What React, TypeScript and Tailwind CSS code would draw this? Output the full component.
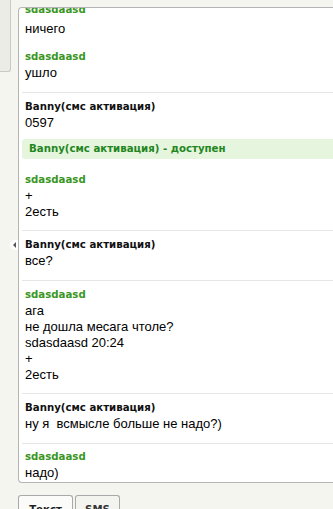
import React from "react";

const nameCls =
  "font-['DejaVu_Sans',Verdana,sans-serif] font-bold text-[10.2px] leading-[16px]";
const bodyCls =
  "font-['Liberation_Sans',Arial,sans-serif] text-[13px] leading-[16px] text-black whitespace-pre";

function Name({ green, children, extra = "" }: { green?: boolean; children: React.ReactNode; extra?: string }) {
  return (
    <div className={`${nameCls} ${green ? "text-[#3a961f]" : "text-[#111111]"} ${extra}`}>{children}</div>
  );
}

function Body({ lines }: { lines: string[] }) {
  return (
    <>
      {lines.map((l, i) => (
        <div key={i} className={bodyCls}>
          {l}
        </div>
      ))}
    </>
  );
}

export default function App() {
  return (
    <div className="w-[333px] h-[509px] overflow-hidden bg-[#f5f5f0] flex items-start">
      <div className="w-[11px] h-[72px] shrink-0 bg-[#ececE7] border-r border-b border-[#c9c9c5] rounded-br-[3px]" />
      <div className="ml-[7px] flex-1 flex flex-col pt-[7px]">
        <div className="relative">
          <div className="h-[476px] bg-white border border-r-0 border-[#b5b5b5] rounded-l-[4px] overflow-hidden flex flex-col justify-end">
            {/* block 0 */}
            <div className="ml-[3px] pl-[3px] pb-[12px]">
              <Name green extra="mb-[3px]">sdasdaasd</Name>
              <Body lines={["ничего"]} />
            </div>
            <div className="ml-[3px] pl-[3px] pb-[11px]">
              <Name green>sdasdaasd</Name>
              <Body lines={["ушло"]} />
            </div>
            {/* block 1 */}
            <div className="ml-[3px] border-t border-[#e6e6e6]">
              <div className="pl-[3px] pt-[6px] pb-[8px]">
                <Name>Banny(смс активация)</Name>
                <Body lines={["0597"]} />
              </div>
              <div className="h-[20px] bg-[#e6f5de] rounded-l-[3px] pl-[7px] flex items-center">
                <div className={`${nameCls} text-[#1f861d] leading-[20px]`}>
                  Banny(смс активация) - доступен
                </div>
              </div>
              <div className="pl-[3px] pt-[13px] pb-[10px]">
                <Name green>sdasdaasd</Name>
                <Body lines={["+", "2есть"]} />
              </div>
            </div>
            {/* block 2 */}
            <div className="ml-[3px] pl-[3px] border-t border-[#e6e6e6] pt-[6px] pb-[11px]">
              <Name>Banny(смс активация)</Name>
              <Body lines={["все?"]} />
            </div>
            {/* block 3 */}
            <div className="ml-[3px] pl-[3px] border-t border-[#e6e6e6] pt-[6px] pb-[10px]">
              <Name green>sdasdaasd</Name>
              <Body
                lines={["ага", "не дошла месага чтоле?", "sdasdaasd 20:24", "+", "2есть"]}
              />
            </div>
            {/* block 4 */}
            <div className="ml-[3px] pl-[3px] border-t border-[#e6e6e6] pt-[6px] pb-[11px]">
              <Name>Banny(смс активация)</Name>
              <Body lines={["ну я  всмысле больше не надо?)"]} />
            </div>
            {/* block 5 */}
            <div className="ml-[3px] pl-[3px] border-t border-[#e6e6e6] pt-[5px] pb-[1px]">
              <Name green>sdasdaasd</Name>
              <Body lines={["надо)"]} />
            </div>
          </div>
          {/* collapse bump */}
          <div className="absolute left-[-8px] top-[233px] w-[8px] h-[10px] bg-white rounded-l-full flex items-center justify-end pr-[2px]">
            <div className="w-0 h-0 border-y-[3px] border-y-transparent border-r-[3px] border-r-[#555555]" />
          </div>
        </div>
        <div className="flex gap-[2px] mt-[12px]">
          <div className="w-[55px] h-[24px] border border-b-0 border-[#a9a9a9] rounded-t-[3px] bg-[#fbfbf9] flex justify-center pt-[6px]">
            <span className={`${nameCls} text-[#222222]`}>Текст</span>
          </div>
          <div className="w-[45px] h-[24px] border border-b-0 border-[#a9a9a9] rounded-t-[3px] bg-[#f3f3ef] flex justify-center pt-[6px]">
            <span className={`${nameCls} text-[#333333]`}>SMS</span>
          </div>
        </div>
      </div>
    </div>
  );
}
